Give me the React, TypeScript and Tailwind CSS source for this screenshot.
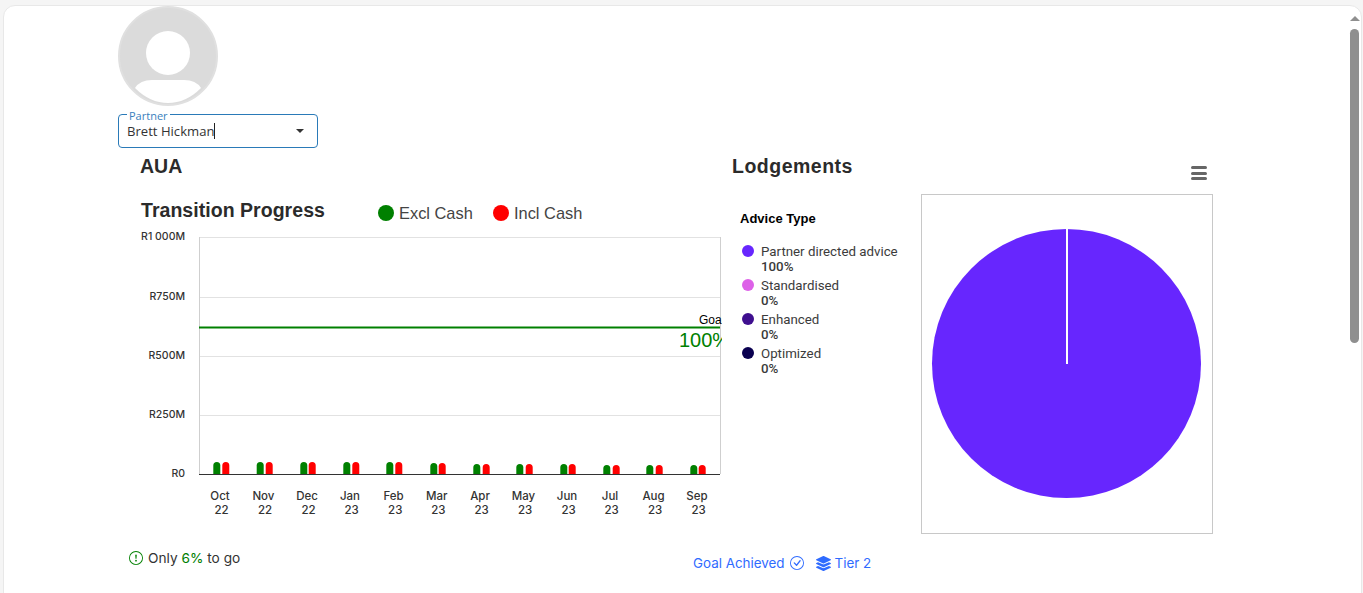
import { BsCheckCircle, BsExclamationCircle } from "react-icons/bs";
import { FaLayerGroup } from "react-icons/fa";

// chart coordinates are page x minus 130, page y minus 228
const bars = [
  { label: "Oct", year: "22", x: 220, g: 83.3, r: 92.3, top: 234.5 },
  { label: "Nov", year: "22", x: 263.4, g: 126.7, r: 135.7, top: 234.5 },
  { label: "Dec", year: "22", x: 307, g: 170.3, r: 178.7, top: 234.5 },
  { label: "Jan", year: "23", x: 350, g: 213.3, r: 222.3, top: 234.5 },
  { label: "Feb", year: "23", x: 393.6, g: 256.3, r: 265.3, top: 234.5 },
  { label: "Mar", year: "23", x: 436.8, g: 300.3, r: 308.7, top: 235.5 },
  { label: "Apr", year: "23", x: 480, g: 343.3, r: 352.7, top: 236.5 },
  { label: "May", year: "23", x: 523.5, g: 386.3, r: 395.7, top: 236.5 },
  { label: "Jun", year: "23", x: 567, g: 430.3, r: 438.7, top: 236.5 },
  { label: "Jul", year: "23", x: 610, g: 473.3, r: 482.7, top: 237.5 },
  { label: "Aug", year: "23", x: 653.5, g: 516.3, r: 525.7, top: 237.5 },
  { label: "Sep", year: "23", x: 697, g: 560.3, r: 568.7, top: 237.5 },
];

const yLabels = [
  { text: "R1 000M", y: 9 },
  { text: "R750M", y: 69 },
  { text: "R500M", y: 128 },
  { text: "R250M", y: 187 },
  { text: "R0", y: 246 },
];

const adviceTypes = [
  { name: "Partner directed advice", value: "100%", color: "bg-[#6726fe]" },
  { name: "Standardised", value: "0%", color: "bg-[#dd61e8]" },
  { name: "Enhanced", value: "0%", color: "bg-[#3f0f8f]" },
  { name: "Optimized", value: "0%", color: "bg-[#0a0050]" },
];

function Avatar() {
  return (
    <svg width="100" height="100" viewBox="0 0 100 100">
      <circle cx="50" cy="50" r="49" fill="#dbdbdb" stroke="#e0e0e0" strokeWidth="2" />
      <circle cx="50" cy="47" r="22" fill="#fff" />
      <path d="M17 82 Q22 74 34 74 H66 Q78 74 83 82 Q68 97 50 97 Q32 97 17 82 Z" fill="#fff" />
    </svg>
  );
}

function TransitionChart() {
  return (
    <svg width="592" height="297" viewBox="0 0 592 297" className="block font-['Inter',sans-serif]">
      {[9, 69, 128, 187].map((y) => (
        <line key={y} x1="69" x2="590" y1={y + 0.5} y2={y + 0.5} stroke="#e2e2e2" />
      ))}
      <line x1="69.5" x2="69.5" y1="9" y2="246" stroke="#cfcfcf" />
      <line x1="590.5" x2="590.5" y1="9" y2="246" stroke="#cfcfcf" />
      <line x1="69" x2="590" y1="246.5" y2="246.5" stroke="#333" />
      <line x1="69" x2="590" y1="99.5" y2="99.5" stroke="#008000" strokeWidth="2" />
      <text x="569" y="96" fontSize="12" fill="#000" fontFamily="Liberation Sans, sans-serif">Goal</text>
      <text x="549" y="119" fontSize="20" fill="#008000" fontFamily="Liberation Sans, sans-serif">100%</text>
      {yLabels.map((l) => (
        <text key={l.text} x="55" y={l.y + 3} textAnchor="end" fontSize="10.5" fontWeight="500" fill="#333">
          {l.text}
        </text>
      ))}
      {bars.map((b) => (
        <g key={b.label}>
          <path d={`M${b.g} 246 V${b.top + 3} a3.5 3.5 0 0 1 7 0 V246 Z`} fill="#008000" />
          <path d={`M${b.r} 246 V${b.top + 3} a3.5 3.5 0 0 1 7 0 V246 Z`} fill="#ff0000" />
          <text x={b.x - 130} y="272" textAnchor="middle" fontSize="11.5" fontWeight="500" fill="#333">
            {b.label}
          </text>
          <text x={b.x - 128.4} y="286" textAnchor="middle" fontSize="11.5" fontWeight="500" fill="#333">
            {b.year}
          </text>
        </g>
      ))}
    </svg>
  );
}

function Pie() {
  return (
    <svg width="290" height="338" viewBox="0 0 290 338" className="block">
      <circle cx="144.5" cy="168.5" r="134.5" fill="#6726fe" />
      <line x1="145" x2="145" y1="34" y2="169" stroke="#fff" strokeWidth="2" />
    </svg>
  );
}

export default function App() {
  return (
    <div className="h-screen overflow-hidden bg-[#f5f5f5] pt-[5px] pl-[3px] pr-[1px] font-['Liberation_Sans',sans-serif]">
      <div className="flex h-[700px] rounded-t-xl border border-[#e8e8e8] bg-white">
        <div className="flex-1 pl-[114px]">
          <Avatar />

          <div className="relative mt-2 flex h-[34px] w-[200px] items-center justify-between rounded border border-[#2a7ab8] pl-2 pr-[13px]">
            <span className="absolute -top-[5px] left-2 bg-white px-[2px] font-['Open_Sans',sans-serif] text-[11px] leading-[12px] text-[#3a80bd]">
              Partner
            </span>
            <span className="border-r border-[#222] font-['Open_Sans',sans-serif] text-[13.1px] leading-[16px] text-[#333]">
              Brett Hickman
            </span>
            <span className="h-0 w-0 border-x-[4px] border-t-[4px] border-x-transparent border-t-[#333]" />
          </div>

          <div className="flex">
            <div className="w-[604px]">
              <h2 className="mt-[6px] pl-[22px] text-[19.5px] font-bold leading-[24px] text-[#2b2b2b]">AUA</h2>
              <div className="mt-[23px] flex h-6 items-center pl-[23px]">
                <h3 className="-mt-[6px] w-[237px] text-[19.5px] font-bold leading-[24px] tracking-[0.04px] text-[#2b2b2b]">
                  Transition Progress
                </h3>
                <span className="h-4 w-4 rounded-full bg-[#008000]" />
                <span className="ml-[5px] w-[94px] text-[16.4px] text-[#444]">Excl Cash</span>
                <span className="h-4 w-4 rounded-full bg-[#ff0000]" />
                <span className="ml-[5px] text-[16.4px] text-[#444]">Incl Cash</span>
              </div>
              <div className="mt-[3px] pl-3">
                <TransitionChart />
              </div>
            </div>

            <div className="w-[491px] pl-[10px]">
              <div className="mt-[6px] flex w-[481px] items-start justify-between pr-[6px]">
                <h2 className="text-[19.5px] font-bold leading-[24px] tracking-[0.5px] text-[#2b2b2b]">Lodgements</h2>
                <div className="mt-[12px] flex w-4 flex-col gap-[2.5px]">
                  <span className="h-[3px] rounded-sm bg-[#666]" />
                  <span className="h-[3px] rounded-sm bg-[#666]" />
                  <span className="h-[3px] rounded-sm bg-[#666]" />
                </div>
              </div>
              <div className="mt-[14px] flex">
                <div className="w-[189px] pl-2 pt-[17px]">
                  <h4 className="text-[13px] font-bold leading-[16px] text-black">Advice Type</h4>
                  <ul className="mt-[17px] flex flex-col gap-[4px] font-['Roboto',sans-serif] text-[13.3px] leading-[15px] text-[#3b3b3b]">
                    {adviceTypes.map((a) => (
                      <li key={a.name} className="flex">
                        <span className={`mt-[1px] ml-[2px] h-3 w-3 rounded-full ${a.color}`} />
                        <div className="ml-[7px]">
                          <div>{a.name}</div>
                          <div className="font-medium">{a.value}</div>
                        </div>
                      </li>
                    ))}
                  </ul>
                </div>
                <div className="border border-[#c8c8c8]">
                  <Pie />
                </div>
              </div>
            </div>
          </div>

          <div className="flex items-start font-['Inter',sans-serif] leading-[20px]">
            <div className="mt-[14px] flex w-[575px] items-center pl-[11px] text-[13.7px] text-[#333]">
              <BsExclamationCircle className="mr-[5px] h-[14px] w-[14px] text-[#008000]" />
              <span>
                Only <span className="text-[#008000]">6%</span> to go
              </span>
            </div>
            <div className="mt-[19px] flex items-center text-[13.4px] text-[#2f6bff]">
              <span>Goal Achieved</span>
              <BsCheckCircle className="ml-[5px] h-[14px] w-[14px]" />
              <FaLayerGroup className="ml-[12px] h-[15px] w-[15px]" />
              <span className="ml-[4px]">Tier 2</span>
            </div>
          </div>
        </div>

        <div className="flex w-[17px] flex-col items-center pt-[10px] pl-[4px]">
          <span className="h-0 w-0 border-x-[5px] border-b-[5px] border-x-transparent border-b-[#8f8f8f]" />
          <span className="mt-[8px] h-[314px] w-[9px] rounded-full bg-[#8f8f8f]" />
        </div>
      </div>
    </div>
  );
}
